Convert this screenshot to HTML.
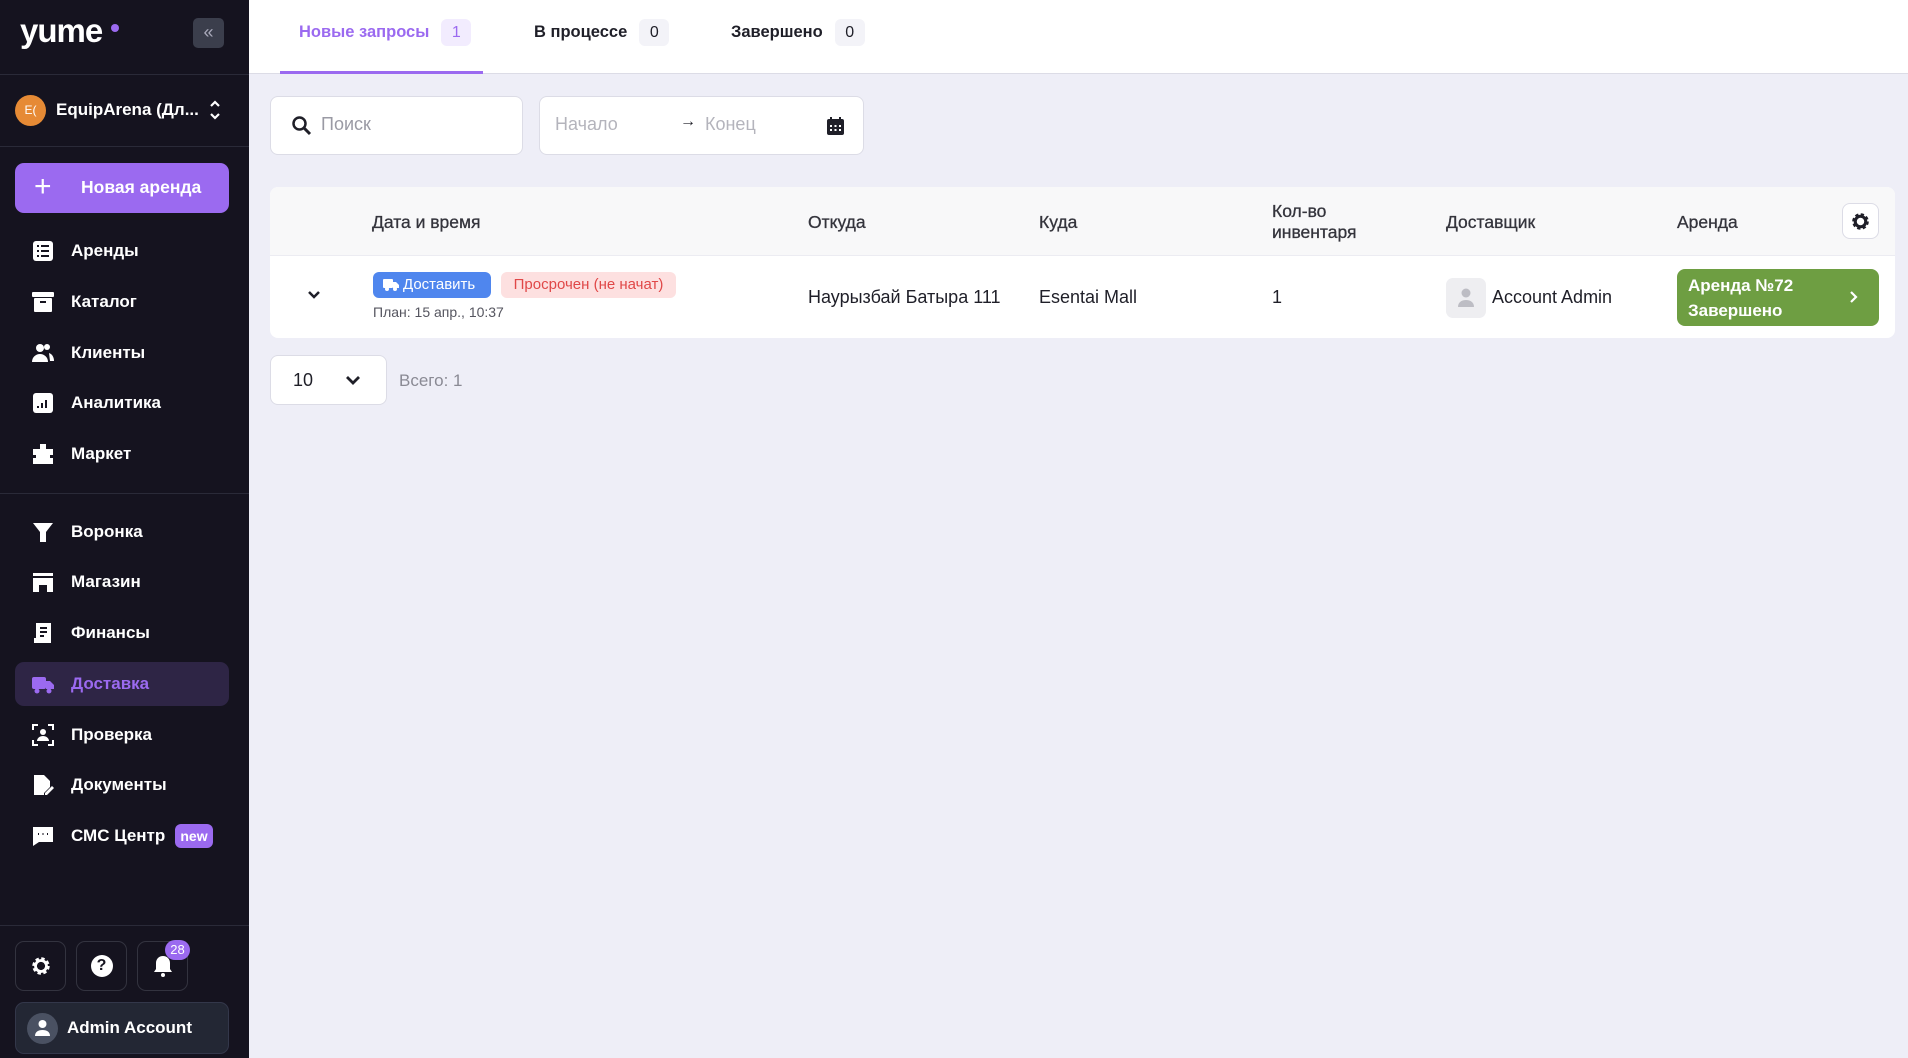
<!DOCTYPE html>
<html><head><meta charset="utf-8"><style>
*{margin:0;padding:0;box-sizing:border-box}
body{width:1908px;height:1058px;overflow:hidden;background:#eeeef7;font-family:"Liberation Sans",sans-serif;position:relative}
.a{position:absolute}
#sb{left:0;top:0;width:249px;height:1058px;background:#15131f;color:#fff}
.hr{position:absolute;left:0;width:249px;height:1px;background:#2a2a38}
.mi{position:absolute;left:15px;width:214px;height:44px;display:flex;align-items:center;font-size:17px;font-weight:bold;color:#fff}
.mi svg{position:absolute;left:16px;width:24px;height:24px}
.mi span{position:absolute;left:56px}
.ib{position:absolute;top:941px;width:51px;height:50px;border:1px solid #33333f;border-radius:9px;display:flex;align-items:center;justify-content:center}
.tab{position:absolute;top:19px;font-size:16.5px;font-weight:bold;color:#1f1f28;display:flex;align-items:center}
.bd{display:inline-block;margin-left:12px;width:30px;height:27px;border-radius:6px;background:#f3f3f8;text-align:center;line-height:27px;font-weight:normal;font-size:16px}
.th{position:absolute;font-size:17.5px;color:#34343c;-webkit-text-stroke:0.3px #34343c}
.td{position:absolute;font-size:18px;color:#1f1f28}
</style></head><body>
<div id="sb" class="a">
 <div class="a" style="left:20px;top:12px;font-size:33px;font-weight:bold;letter-spacing:-1px">yume</div>
 <div class="a" style="left:111px;top:24px;width:8px;height:8px;border-radius:50%;background:#9b6af0"></div>
 <div class="a" style="left:193px;top:18px;width:31px;height:30px;border-radius:5px;background:#3b3e4c;color:#aab;font-size:18px;text-align:center;line-height:29px">«</div>
 <div class="hr" style="top:74px"></div>
 <div class="a" style="left:15px;top:95px;width:31px;height:31px;border-radius:50%;background:#e68a35;font-size:12px;text-align:center;line-height:31px">E(</div>
 <div class="a" style="left:56px;top:100px;font-size:17px;font-weight:bold">EquipArena (Дл...</div>
 <svg class="a" style="left:208px;top:98px" width="14" height="24" viewBox="0 0 14 24"><path d="M3 8l4-4 4 4M3 16l4 4 4-4" stroke="#fff" stroke-width="2.2" fill="none"/></svg>
 <div class="hr" style="top:146px"></div>
 <div class="a" style="left:15px;top:163px;width:214px;height:50px;border-radius:9px;background:#9b6af0"></div>
 <div class="a" style="left:34px;top:170px;font-size:30px;font-weight:300;color:#fff">+</div>
 <div class="a" style="left:81px;top:177px;font-size:17.5px;font-weight:bold">Новая аренда</div>

 <div class="mi" style="top:229px"><svg viewBox="0 0 24 24"><rect x="2" y="2" width="20" height="20" rx="3" fill="#fff"/><path d="M6 7h2M10 7h8M6 12h2M10 12h8M6 17h2M10 17h8" stroke="#15131f" stroke-width="2"/></svg><span>Аренды</span></div>
 <div class="mi" style="top:280px"><svg viewBox="0 0 24 24"><rect x="1" y="2" width="22" height="5" rx="1" fill="#fff"/><rect x="3" y="8" width="18" height="14" rx="1" fill="#fff"/><path d="M9 12h6" stroke="#15131f" stroke-width="2"/></svg><span>Каталог</span></div>
 <div class="mi" style="top:331px"><svg viewBox="0 0 24 24"><circle cx="9" cy="7" r="4" fill="#fff"/><path d="M1 21c0-5 4-8 8-8s8 3 8 8z" fill="#fff"/><circle cx="16" cy="6" r="3" fill="#fff"/><path d="M18 12c3 1 5 4 5 8h-4" fill="#fff"/></svg><span>Клиенты</span></div>
 <div class="mi" style="top:381px"><svg viewBox="0 0 24 24"><rect x="2" y="2" width="20" height="20" rx="3" fill="#fff"/><path d="M7 17v-2M11 17v-5M15 17v-8" stroke="#15131f" stroke-width="2"/></svg><span>Аналитика</span></div>
 <div class="mi" style="top:432px"><svg viewBox="0 0 24 24"><path d="M9 2h6v5h7v6h-3v3h3v6H2v-6h3v-3H2V7h7z" fill="#fff"/></svg><span>Маркет</span></div>
 <div class="hr" style="top:493px"></div>
 <div class="mi" style="top:510px"><svg viewBox="0 0 24 24"><path d="M2 3h20l-7 9v10h-6V12z" fill="#fff"/></svg><span>Воронка</span></div>
 <div class="mi" style="top:560px"><svg viewBox="0 0 24 24"><rect x="2" y="3" width="20" height="3" fill="#fff"/><path d="M2 8h20v14h-6v-7H8v7H2z" fill="#fff"/></svg><span>Магазин</span></div>
 <div class="mi" style="top:611px"><svg viewBox="0 0 24 24"><path d="M5 2h15v20H3v-5h2z" fill="#fff"/><path d="M9 7h7M9 11h7M9 15h4" stroke="#15131f" stroke-width="2"/></svg><span>Финансы</span></div>
 <div class="mi" style="top:662px;background:#2e2545;border-radius:9px;color:#9b6af0"><svg viewBox="0 0 24 24"><rect x="1" y="5" width="14" height="12" rx="2" fill="#9b6af0"/><path d="M15 9h4l4 4v4h-8z" fill="#9b6af0"/><circle cx="6" cy="19" r="2.5" fill="#9b6af0"/><circle cx="18" cy="19" r="2.5" fill="#9b6af0"/></svg><span>Доставка</span></div>
 <div class="mi" style="top:713px"><svg viewBox="0 0 24 24"><path d="M2 7V2h5M17 2h5v5M22 17v5h-5M7 22H2v-5" stroke="#fff" stroke-width="2" fill="none"/><circle cx="12" cy="9" r="3" fill="#fff"/><path d="M6 18c0-3 3-5 6-5s6 2 6 5z" fill="#fff"/></svg><span>Проверка</span></div>
 <div class="mi" style="top:763px"><svg viewBox="0 0 24 24"><path d="M3 2h10l6 6v6l-6 6v2H3z" fill="#fff"/><path d="M14 20l7-7 2 2-7 7h-2z" fill="#fff"/></svg><span>Документы</span></div>
 <div class="mi" style="top:814px"><svg viewBox="0 0 24 24"><path d="M2 3h20v15H8l-6 4z" fill="#fff"/><path d="M7 10h1M11.5 10h1M16 10h1" stroke="#15131f" stroke-width="2"/></svg><span>СМС Центр</span><div class="a" style="left:160px;top:10px;width:38px;height:24px;border-radius:6px;background:#9b6af0;font-size:14px;text-align:center;line-height:24px">new</div></div>
 <div class="hr" style="top:925px"></div>
 <div class="ib" style="left:15px"><svg width="22" height="22" viewBox="0 0 24 24"><circle cx="12" cy="12" r="7" fill="none" stroke="#fff" stroke-width="5" stroke-dasharray="3.2 2.3"/><circle cx="12" cy="12" r="6" fill="none" stroke="#fff" stroke-width="3"/></svg></div>
 <div class="ib" style="left:76px"><div style="width:22px;height:22px;border-radius:50%;background:#fff;color:#15131f;font-weight:bold;font-size:16px;text-align:center;line-height:22px">?</div></div>
 <div class="ib" style="left:137px"><svg width="22" height="24" viewBox="0 0 22 24"><path d="M11 2c4 0 7 3 7 7v6l2 3H2l2-3V9c0-4 3-7 7-7z" fill="#fff"/><circle cx="11" cy="21" r="2" fill="#fff"/></svg></div>
 <div class="a" style="left:165px;top:940px;width:25px;height:20px;border-radius:10px;background:#9b6af0;font-size:13px;text-align:center;line-height:20px">28</div>
 <div class="a" style="left:15px;top:1002px;width:214px;height:52px;border-radius:9px;background:#232734;border:1px solid #33374a"></div>
 <div class="a" style="left:27px;top:1013px;width:31px;height:31px;border-radius:50%;background:#4a5162"></div>
 <svg class="a" style="left:34px;top:1019px" width="17" height="18" viewBox="0 0 17 18"><circle cx="8.5" cy="5" r="4" fill="#fff"/><path d="M1 17c0-4 3-6 7.5-6s7.5 2 7.5 6z" fill="#fff"/></svg>
 <div class="a" style="left:67px;top:1018px;font-size:17px;font-weight:bold">Admin Account</div>
</div>

<div class="a" style="left:249px;top:0;width:1659px;height:74px;background:#fff;border-bottom:1px solid #dcdce6"></div>
<div class="tab" style="left:299px;color:#9b6af0">Новые запросы<span class="bd" style="background:#f2ecfe">1</span></div>
<div class="tab" style="left:534px">В процессе<span class="bd">0</span></div>
<div class="tab" style="left:731px">Завершено<span class="bd">0</span></div>
<div class="a" style="left:280px;top:71px;width:203px;height:3px;background:#9b6af0"></div>

<div class="a" style="left:270px;top:96px;width:253px;height:59px;background:#fff;border:1px solid #dcdce6;border-radius:8px"></div>
<svg class="a" style="left:291px;top:115px" width="22" height="22" viewBox="0 0 22 22"><circle cx="8.5" cy="8.5" r="6" stroke="#1f1f28" stroke-width="2.5" fill="none"/><path d="M13 13l6 6" stroke="#1f1f28" stroke-width="3"/></svg>
<div class="a" style="left:321px;top:114px;font-size:18px;color:#9a9aa4">Поиск</div>
<div class="a" style="left:539px;top:96px;width:325px;height:59px;background:#fff;border:1px solid #dcdce6;border-radius:8px"></div>
<div class="a" style="left:555px;top:114px;font-size:18px;color:#b4b4bc">Начало</div>
<div class="a" style="left:680px;top:113px;font-size:16px;color:#1f1f28">→</div>
<div class="a" style="left:705px;top:114px;font-size:18px;color:#b4b4bc">Конец</div>
<svg class="a" style="left:826px;top:116px" width="19" height="20" viewBox="0 0 19 20"><rect x="1" y="3" width="17" height="16" rx="2" fill="#1f1f28"/><path d="M5 1v4M14 1v4" stroke="#1f1f28" stroke-width="2"/><path d="M4 10h2M8.5 10h2M13 10h2M4 14h2M8.5 14h2M13 14h2" stroke="#fff" stroke-width="2"/></svg>

<div class="a" style="left:270px;top:187px;width:1625px;height:151px;background:#fff;border-radius:8px;overflow:hidden">
 <div style="height:69px;background:#f8f8f9;border-bottom:1px solid #ececf2"></div>
</div>
<div class="th" style="left:372px;top:212px">Дата и время</div>
<div class="th" style="left:808px;top:212px">Откуда</div>
<div class="th" style="left:1039px;top:212px">Куда</div>
<div class="th" style="left:1272px;top:201px;line-height:21px">Кол-во<br>инвентаря</div>
<div class="th" style="left:1446px;top:212px">Доставщик</div>
<div class="th" style="left:1677px;top:212px">Аренда</div>
<div class="a" style="left:1842px;top:203px;width:37px;height:36px;border:1px solid #dcdce6;border-radius:8px;background:#fff"></div>
<svg class="a" style="left:1850px;top:211px" width="21" height="21" viewBox="0 0 24 24"><circle cx="12" cy="12" r="7" fill="none" stroke="#1f1f28" stroke-width="5" stroke-dasharray="3.2 2.3"/><circle cx="12" cy="12" r="6" fill="none" stroke="#1f1f28" stroke-width="3.5"/></svg>

<svg class="a" style="left:307px;top:290px" width="14" height="10" viewBox="0 0 14 10"><path d="M2 2l5 5 5-5" stroke="#1f1f28" stroke-width="2.5" fill="none"/></svg>
<div class="a" style="left:373px;top:272px;width:118px;height:26px;border-radius:6px;background:#4f86ee;color:#fff;font-size:15px;line-height:26px;padding-left:30px">Доставить</div>
<svg class="a" style="left:383px;top:279px" width="16" height="12" viewBox="0 0 16 12"><rect x="0" y="0" width="10" height="9" rx="1" fill="#fff"/><path d="M10 3h3l3 3v3h-6z" fill="#fff"/><circle cx="4" cy="10" r="2" fill="#fff"/><circle cx="12" cy="10" r="2" fill="#fff"/></svg>
<div class="a" style="left:501px;top:272px;width:175px;height:26px;border-radius:6px;background:#fde0e0;color:#e04848;font-size:15px;line-height:26px;text-align:center">Просрочен (не начат)</div>
<div class="a" style="left:373px;top:304px;font-size:14px;color:#55555f">План: 15 апр., 10:37</div>
<div class="td" style="left:808px;top:287px">Наурызбай Батыра 111</div>
<div class="td" style="left:1039px;top:287px">Esentai Mall</div>
<div class="td" style="left:1272px;top:287px">1</div>
<div class="a" style="left:1446px;top:278px;width:40px;height:40px;border-radius:7px;background:#eeeef1"></div>
<svg class="a" style="left:1457px;top:287px" width="18" height="21" viewBox="0 0 18 21"><circle cx="9" cy="6" r="4.5" fill="#bdbdc4"/><path d="M1 20c0-5 4-7 8-7s8 2 8 7z" fill="#bdbdc4"/></svg>
<div class="td" style="left:1492px;top:287px">Account Admin</div>
<div class="a" style="left:1677px;top:269px;width:202px;height:57px;border-radius:8px;background:#6e9e42;color:#fff;font-size:17px;font-weight:bold;line-height:25px;padding:4px 0 0 11px">Аренда №72<br>Завершено</div>
<svg class="a" style="left:1849px;top:290px" width="10" height="14" viewBox="0 0 10 14"><path d="M2 2l5 5-5 5" stroke="#fff" stroke-width="2.2" fill="none"/></svg>

<div class="a" style="left:270px;top:355px;width:117px;height:50px;background:#fff;border:1px solid #dcdce6;border-radius:8px"></div>
<div class="a" style="left:293px;top:370px;font-size:18px;color:#1f1f28">10</div>
<svg class="a" style="left:345px;top:375px" width="16" height="11" viewBox="0 0 16 11"><path d="M2 2l6 6 6-6" stroke="#1f1f28" stroke-width="2.8" fill="none"/></svg>
<div class="a" style="left:399px;top:371px;font-size:17px;color:#8a8a94">Всего: 1</div>
</body></html>
